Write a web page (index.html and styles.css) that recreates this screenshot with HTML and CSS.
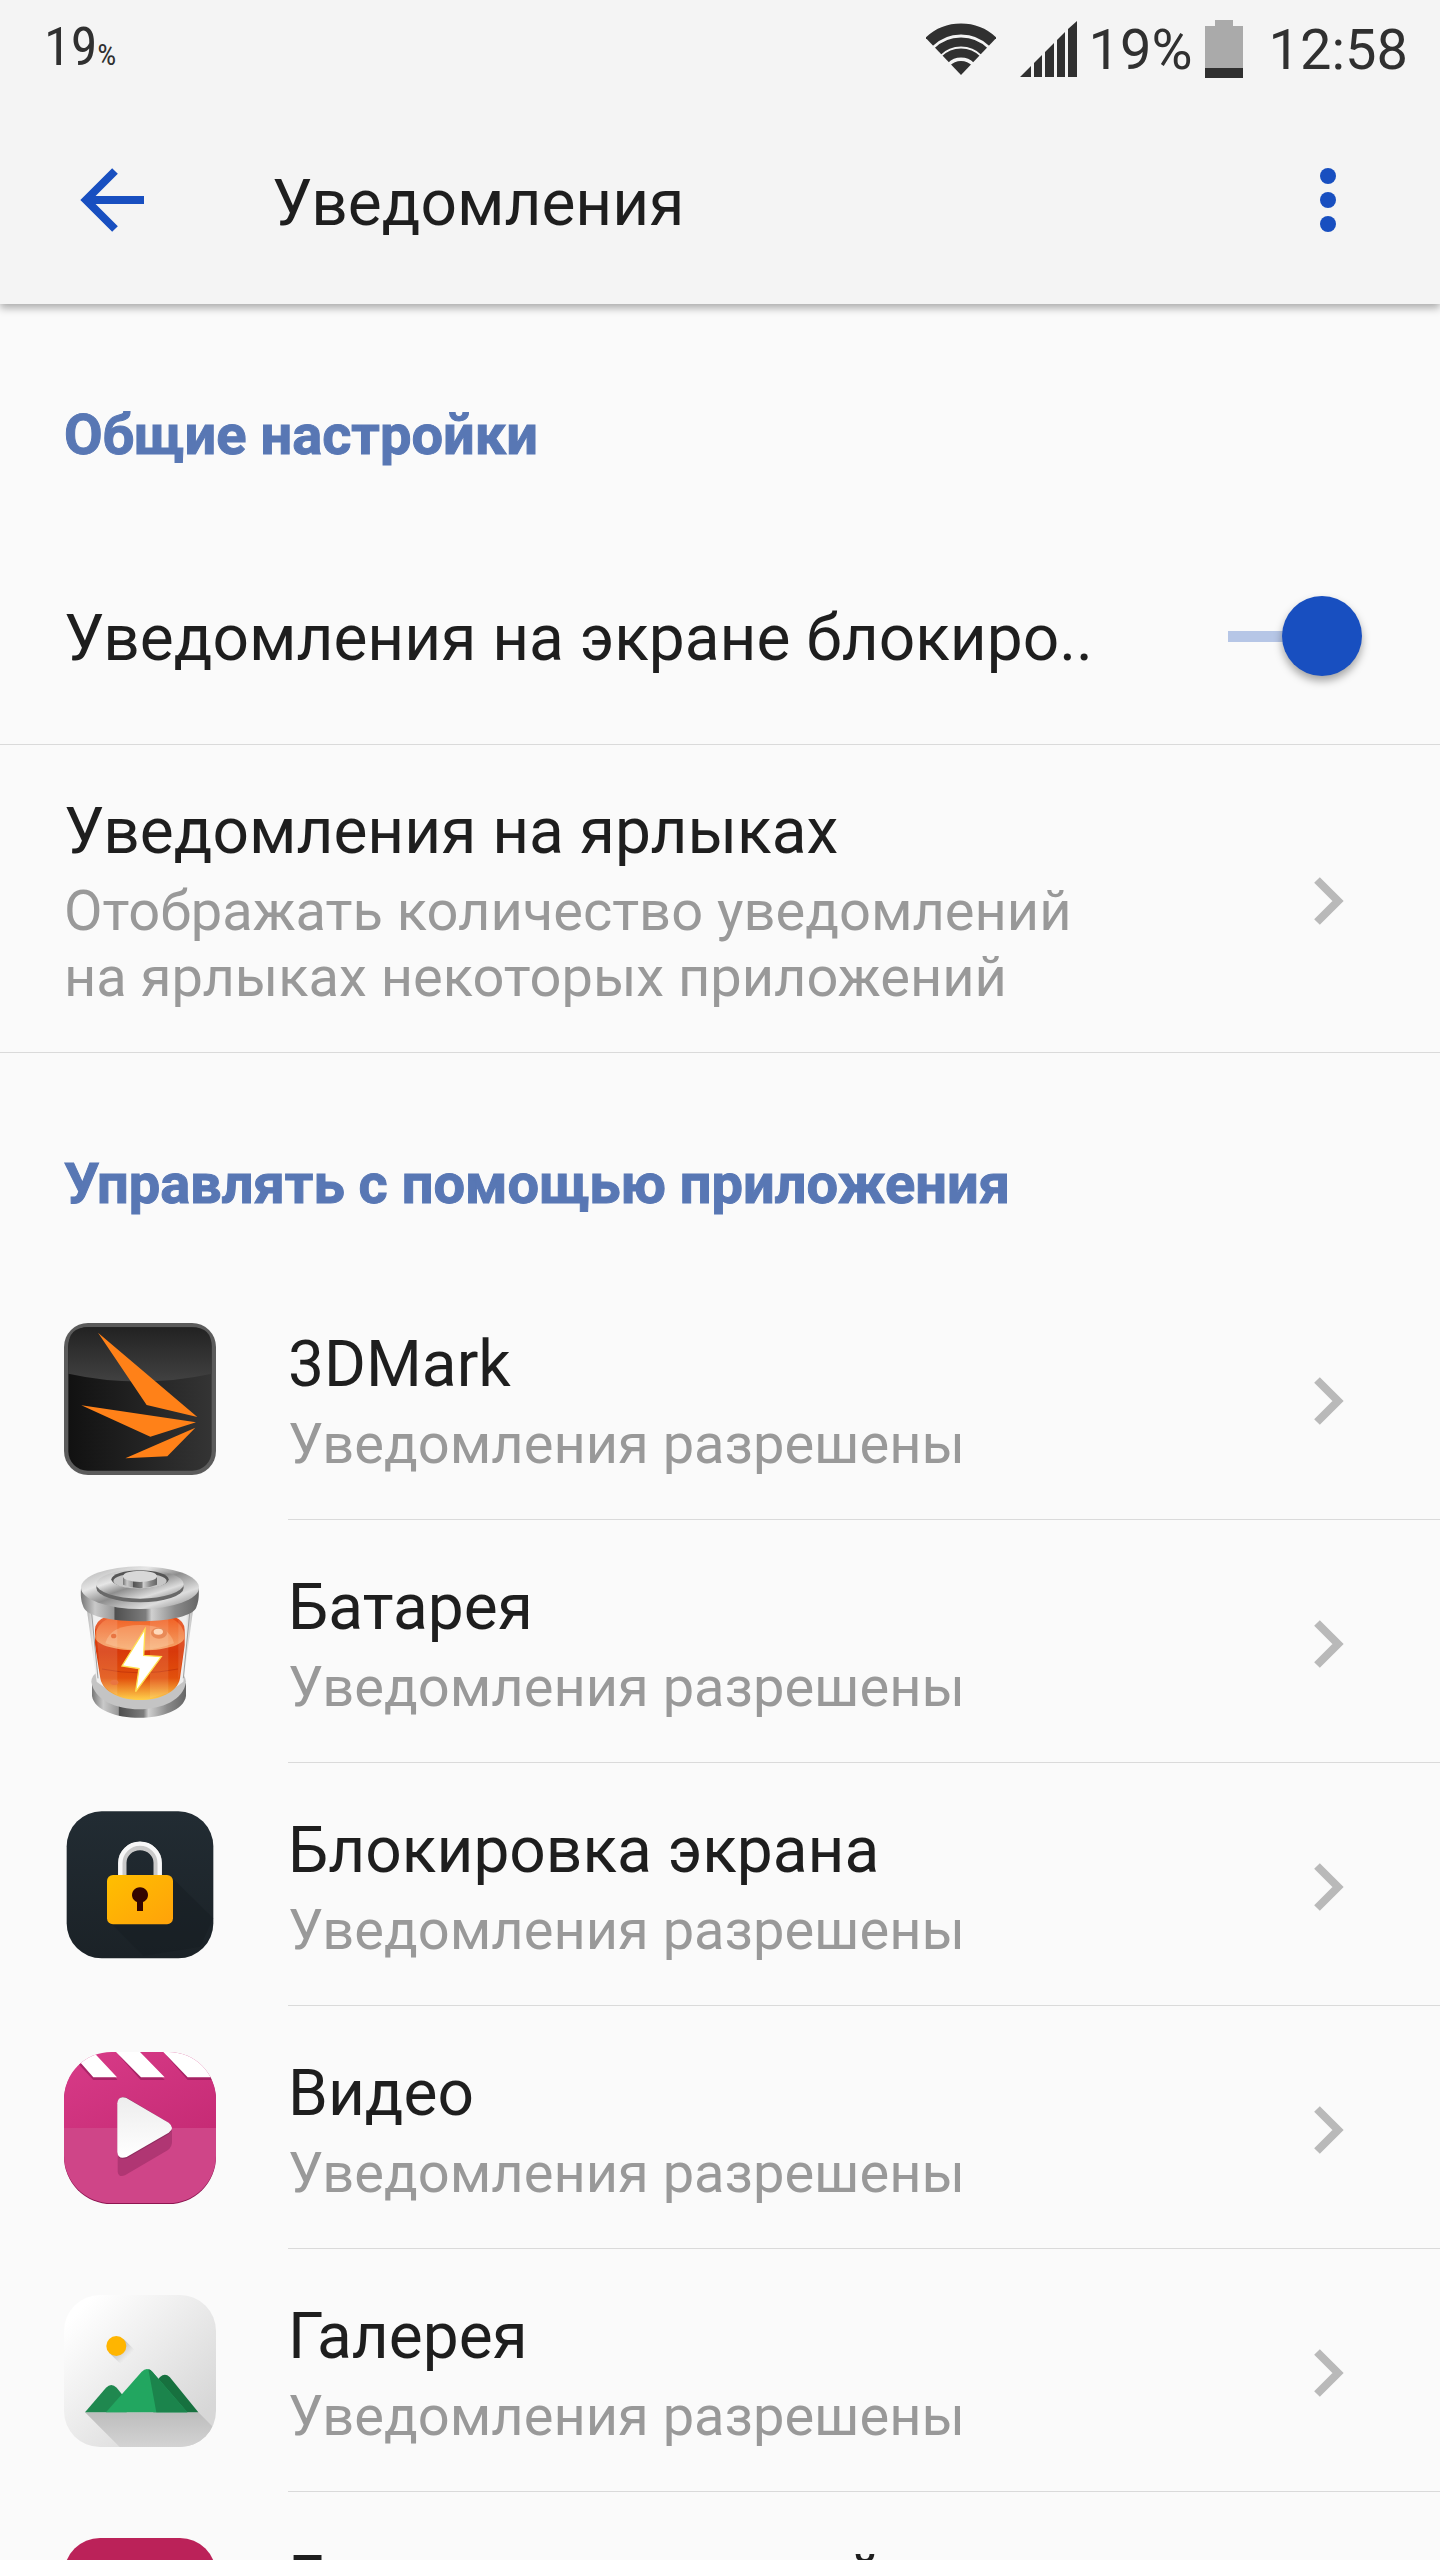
FILE: index.html
```html
<!DOCTYPE html>
<html lang="ru">
<head>
<meta charset="utf-8">
<meta name="viewport" content="width=device-width, initial-scale=1">
<title>Уведомления</title>
<link rel="stylesheet" href="styles.css">
</head>
<body>
<svg class="defs" aria-hidden="true">
  <symbol id="chevron" viewBox="0 0 30 48"><path d="M3 3 24 24 3 45" fill="none" stroke="#b9b9b9" stroke-width="8"/></symbol>
</svg>
<div class="screen">
  <header class="top">
    <div class="status">
      <span class="level">19<span class="level-unit">%</span></span>
      <div class="indicators">
        <svg class="wifi" viewBox="0 0 70 52" role="img" aria-label="Wi-Fi">
          <clipPath id="fan"><path d="M-3 12 35 52 73 12V0H-3z"/></clipPath>
          <g clip-path="url(#fan)" fill="none" stroke="#303030">
            <circle cx="35" cy="52" r="46" stroke-width="11"/>
            <circle cx="35" cy="53" r="34" stroke-width="9"/>
            <circle cx="35" cy="53" r="23" stroke-width="9"/>
            <circle cx="35" cy="54" r="8" stroke-width="16"/>
          </g>
        </svg>
        <svg class="signal" viewBox="0 0 57 56" role="img" aria-label="Сигнал сети">
          <path d="M0 56 11 45V56zM14 42 22 34V56H14zM25 31 34 22V56H25zM37 19 45 11V56H37zM48 8 57 0V56H48z" fill="#303030"/>
        </svg>
        <span class="percent">19%</span>
        <svg class="battery" viewBox="0 0 38 58" role="img" aria-label="Батарея">
          <path d="M0 6H10V0H28V6H38V48H0z" fill="#aaa"/><path d="M0 48H38V58H0z" fill="#303030"/>
        </svg>
        <time class="clock">12:58</time>
      </div>
    </div>
    <div class="bar">
      <button class="icon-button" type="button" aria-label="Назад">
        <svg viewBox="0 0 64 64"><path d="M35 3 6 32 35 61M6 32H64" fill="none" stroke="#184fc0" stroke-width="8"/></svg>
      </button>
      <h1 class="title">Уведомления</h1>
      <button class="icon-button" type="button" aria-label="Ещё">
        <svg viewBox="0 0 64 64"><g fill="#184fc0"><circle cx="32" cy="8" r="8"/><circle cx="32" cy="32" r="8"/><circle cx="32" cy="56" r="8"/></g></svg>
      </button>
    </div>
  </header>

  <main class="content">
    <h2 class="section">Общие настройки</h2>
    <div class="row row-switch">
      <label class="name" for="lock">Уведомления на экране блокиро..</label>
      <input class="switch" id="lock" type="checkbox" role="switch" checked>
    </div>
    <a class="row row-badges" href="#badges">
      <span class="text">
        <span class="name">Уведомления на ярлыках</span>
        <span class="note">Отображать количество уведомлений на ярлыках некоторых приложений</span>
      </span>
      <svg class="chevron"><use href="#chevron"/></svg>
    </a>

    <h2 class="section">Управлять с помощью приложения</h2>
    <nav class="apps">
      <a class="app" href="#3dmark">
        <svg class="app-icon" viewBox="72 69 456 456">
          <defs>
            <linearGradient id="mk" x1="0" x2="1"><stop offset="0" stop-color="#111"/><stop offset="1" stop-color="#343434"/></linearGradient>
            <linearGradient id="mg" x1="0" x2="0" y1="0" y2="1"><stop offset="0" stop-color="#222"/><stop offset="1" stop-color="#414141"/></linearGradient>
          </defs>
          <rect x="72" y="69" width="456" height="456" rx="72" fill="#5b5b5b"/>
          <rect x="85" y="82" width="430" height="430" rx="58" fill="url(#mk)"/>
          <path d="M85 221V140Q85 82 143 82H457Q515 82 515 140V221Q300 268 85 221z" fill="url(#mg)"/>
          <path d="M174 98 472 351 320 315zM124 316 468 367 331 410zM466 383 382 469 256 475z" fill="#ff8118"/>
        </svg>
        <span class="app-body"><span class="text"><span class="name">3DMark</span><span class="note">Уведомления разрешены</span></span>
        <svg class="chevron"><use href="#chevron"/></svg></span>
      </a>
      <a class="app" href="#battery">
        <svg class="app-icon" viewBox="72 63 456 456">
          <defs>
            <linearGradient id="st" x1="0" x2="1"><stop offset="0" stop-color="#777"/><stop offset=".12" stop-color="#c9c9c9"/><stop offset=".28" stop-color="#999"/><stop offset=".29" stop-color="#4f4f4f"/><stop offset=".55" stop-color="#7d7d7d"/><stop offset=".6" stop-color="#d0d0d0"/><stop offset=".8" stop-color="#8a8a8a"/><stop offset="1" stop-color="#666"/></linearGradient>
            <linearGradient id="lid" x1="0" x2="1" y1="0" y2="1"><stop offset="0" stop-color="#aaa"/><stop offset=".3" stop-color="#e6e6e6"/><stop offset=".5" stop-color="#8e8e8e"/><stop offset=".75" stop-color="#ddd"/><stop offset="1" stop-color="#777"/></linearGradient>
            <linearGradient id="liq" x1="0" x2="0" y1="0" y2="1"><stop offset="0" stop-color="#e9531c"/><stop offset=".45" stop-color="#d8390a"/><stop offset=".75" stop-color="#e2500c"/><stop offset="1" stop-color="#ffd04c"/></linearGradient>
            <linearGradient id="sur" x1="0" x2="0" y1="0" y2="1"><stop offset="0" stop-color="#f0581c"/><stop offset="1" stop-color="#f5a468"/></linearGradient>
            <linearGradient id="gl" x1="0" x2="1"><stop offset="0" stop-color="#b2b2b2"/><stop offset=".07" stop-color="#f0f0f0"/><stop offset=".93" stop-color="#eee"/><stop offset="1" stop-color="#b8b8b8"/></linearGradient>
          </defs>
          <path d="M156 415V453C170 540 425 540 438 453V415z" fill="url(#st)"/>
          <path d="M154 410C170 520 425 520 438 410Q435 385 418 380H174Q155 390 154 410z" fill="#c4c4c4"/>
          <path d="M140 190H460L430 410Q300 510 170 410z" fill="url(#gl)"/>
          <path d="M165 255Q165 200 300 200T434 255V300L420 400C405 487 197 487 181 400L165 300z" fill="url(#liq)"/>
          <path d="M165 275C170 330 430 330 434 275Q430 205 300 205T165 275z" fill="url(#sur)"/>
          <path d="M196 295Q210 240 300 240T402 295Q300 335 196 295z" fill="#ffe0b8" opacity=".3"/>
          <path d="M186 372Q300 395 414 372" fill="none" stroke="#b82c08" stroke-width="3" opacity=".6"/>
          <path d="M165 210H232V450Q190 435 181 400z" fill="#fff" opacity=".12"/>
          <path d="M330 205H385V445L330 460zM415 220H434V300L415 405z" fill="#fff" opacity=".1"/>
          <path d="M155 205 174 400M449 205 430 400" stroke="#a0a0a0" stroke-width="3"/>
          <ellipse cx="357" cy="264" rx="24" ry="17" fill="#e98a57"/><ellipse cx="355" cy="260" rx="14" ry="9" fill="#ffd9bb"/>
          <ellipse cx="221" cy="273" rx="8" ry="7" fill="#e97542"/><ellipse cx="223" cy="412" rx="12" ry="8" fill="#e97542"/>
          <path d="M315 252 246 363 297 371 287 440 364 335 311 331z" fill="#fff" stroke="#ffe04f" stroke-width="4"/>
          <path d="M123 130C120 165 128 180 132 190C160 242 440 242 468 190C474 175 478 160 476 130z" fill="url(#st)"/>
          <ellipse cx="300" cy="128" rx="177" ry="64" fill="url(#lid)"/>
          <ellipse cx="300" cy="128" rx="131" ry="44" fill="#686868"/>
          <ellipse cx="300" cy="117" rx="131" ry="44" fill="url(#lid)"/>
          <ellipse cx="300" cy="103" rx="86" ry="27" fill="#555"/><ellipse cx="300" cy="108" rx="80" ry="23" fill="#c6c6c6"/>
          <path d="M249 94V119Q300 140 351 119V94z" fill="url(#st)"/><ellipse cx="300" cy="94" rx="51" ry="17" fill="#d8d8d8"/>
        </svg>
        <span class="app-body"><span class="text"><span class="name">Батарея</span><span class="note">Уведомления разрешены</span></span>
        <svg class="chevron"><use href="#chevron"/></svg></span>
      </a>
      <a class="app" href="#lockscreen">
        <svg class="app-icon" viewBox="72 57 456 456">
          <defs>
            <linearGradient id="lk" x1="0" x2="0" y1="0" y2="1"><stop offset="0" stop-color="#222c33"/><stop offset="1" stop-color="#1b2227"/></linearGradient>
            <linearGradient id="yl" x1="0" x2="1" y1="0" y2="1"><stop offset="0" stop-color="#ffbf00"/><stop offset="1" stop-color="#ffa20a"/></linearGradient>
          </defs>
          <rect x="80" y="64" width="440" height="441" rx="105" fill="url(#lk)"/>
          <path d="M208 395 310 497 480 470 520 385 395 262V395z" fill="#171d21" opacity=".45"/>
          <path d="M247 260V218A53 50 0 0 1 353 218V260" fill="none" stroke="#c9c9c9" stroke-width="25"/>
          <path d="M241 260V220A59 59 0 0 1 359 220V260" fill="none" stroke="#f8f8f8" stroke-width="13"/>
          <rect x="201" y="255" width="198" height="148" rx="18" fill="url(#yl)"/>
          <path d="M291 336A24 23 0 1 1 309 336V363H291z" fill="#350500"/>
        </svg>
        <span class="app-body"><span class="text"><span class="name">Блокировка экрана</span><span class="note">Уведомления разрешены</span></span>
        <svg class="chevron"><use href="#chevron"/></svg></span>
      </a>
      <a class="app" href="#video">
        <svg class="app-icon" viewBox="72 66 456 456">
          <defs>
            <clipPath id="vc"><rect x="72" y="66" width="456" height="453" rx="142"/></clipPath>
            <linearGradient id="pk" x1="0" x2="1" y1="0" y2="1"><stop offset="0" stop-color="#d83b88"/><stop offset="1" stop-color="#c62b75"/></linearGradient>
            <linearGradient id="pl" x1="0" x2="0" y1="0" y2="1"><stop offset="0" stop-color="#ededed"/><stop offset="1" stop-color="#fff"/></linearGradient>
          </defs>
          <rect x="72" y="69" width="456" height="453" rx="142" fill="#8d1550"/>
          <g clip-path="url(#vc)">
            <path d="M72 66H528V294H72z" fill="url(#pk)"/><path d="M72 294H528V519H72z" fill="#cf4588"/>
            <path d="M110 96 160 150H232L226 142zM236 76 302 150H374L366 142zM378 76 443 150H515V142z" fill="#8d1955" opacity=".6"/>
            <path d="M110 85 160 142H231L160 66H100zM228 66 303 142H374L300 66zM370 66 443 142H528V66z" fill="#fff"/>
          </g>
          <path d="M233 380V425Q236 444 255 436L384 360Q396 350 396 335V300z" fill="#b03673"/>
          <path d="M233 223Q233 196 258 202L386 278Q406 294 386 312L260 385Q234 392 233 368z" fill="#8e2c5f"/>
          <path d="M232 220Q234 196 258 203L386 278Q406 294 386 308L260 381Q234 390 232 366z" fill="url(#pl)"/>
        </svg>
        <span class="app-body"><span class="text"><span class="name">Видео</span><span class="note">Уведомления разрешены</span></span>
        <svg class="chevron"><use href="#chevron"/></svg></span>
      </a>
      <a class="app" href="#gallery">
        <svg class="app-icon" viewBox="72 75 456 456">
          <defs>
            <clipPath id="gc"><rect x="72" y="75" width="456" height="456" rx="108"/></clipPath>
            <linearGradient id="gr" x1="0" x2="1" y1="0" y2="1"><stop offset=".1" stop-color="#fff"/><stop offset=".85" stop-color="#d7d7d7"/></linearGradient>
            <linearGradient id="ss" gradientUnits="userSpaceOnUse" x1="230" y1="230" x2="262" y2="262"><stop offset="0" stop-color="#bbb"/><stop offset="1" stop-color="#bbb" stop-opacity="0"/></linearGradient>
            <linearGradient id="ms" x1="0" x2="0" y1="0" y2="1"><stop offset="0" stop-color="#bdbdbd"/><stop offset="1" stop-color="#d3d3d3"/></linearGradient>
          </defs>
          <g clip-path="url(#gc)">
            <path d="M72 75H528V531H72z" fill="url(#gr)"/>
            <path d="M135 427H475L528 480V531H239z" fill="url(#ms)"/>
            <path d="M208 249 251 207 290 246 248 288z" fill="url(#ss)"/>
          </g>
          <circle cx="229" cy="228" r="30" fill="#ffb500"/>
          <path d="M135 427 198 353Q214 337 230 353L260 390V427z" fill="#1f884f"/>
          <path d="M340 427V345L360 321Q375 308 389 321L475 427z" fill="#17713f"/>
          <path d="M198 427 305 305Q321 289 337 305L442 427z" fill="#22a660"/>
          <path d="M325 297Q333 299 337 305L442 427H349z" fill="#1b844c"/>
        </svg>
        <span class="app-body"><span class="text"><span class="name">Галерея</span><span class="note">Уведомления разрешены</span></span>
        <svg class="chevron"><use href="#chevron"/></svg></span>
      </a>
      <a class="app" href="#group">
        <svg class="app-icon" viewBox="0 0 152 152"><rect width="152" height="152" rx="36" fill="#bb2259"/></svg>
        <span class="app-body"><span class="text"><span class="name">Группа приложений</span><span class="note">Уведомления разрешены</span></span>
        <svg class="chevron"><use href="#chevron"/></svg></span>
      </a>
    </nav>
  </main>
</div>
</body>
</html>
```
FILE: styles.css
```css
* { box-sizing: border-box; }

body {
  margin: 0;
  background: #fafafa;
  color: #1e1e1e;
  font-family: Roboto, "Noto Sans", sans-serif;
}

.defs { position: absolute; width: 0; height: 0; }

.screen {
  display: flex;
  flex-direction: column;
  height: 100vh;
}

.top {
  flex: none;
  z-index: 1;
  background: #f4f4f4;
  box-shadow: 0 4px 8px rgba(0, 0, 0, 0.32);
}

.status {
  display: flex;
  justify-content: space-between;
  align-items: center;
  height: 98px;
  padding: 0 32px 0 44px;
  color: #303030;
}

.level {
  padding-top: 4px;
  font-family: "Roboto Condensed", "Liberation Sans Narrow", Roboto, sans-serif;
  font-size: 54px;
  line-height: 98px;
}
.level-unit { font-size: 30px; }

.indicators { display: flex; align-items: center; }
.percent, .clock {
  padding-top: 2px;
  font-size: 56px;
  line-height: 100px;
}
.wifi { width: 70px; height: 52px; margin-right: 24px; }
.signal { width: 57px; height: 56px; margin-right: 12px; }
.battery { width: 38px; height: 58px; margin: 0 26px 0 12px; }

.bar {
  display: flex;
  align-items: center;
  height: 206px;
  padding: 0 80px 2px;
}
.icon-button {
  width: 64px;
  height: 64px;
  padding: 0;
  border: 0;
  background: none;
}
.icon-button svg { display: block; width: 64px; height: 64px; }
.title {
  flex: 1;
  margin: 0 0 0 128px;
  padding-top: 8px;
  font-size: 64px;
  font-weight: 400;
  line-height: 76px;
}

.content {
  flex: 1;
  min-height: 0;
  overflow-y: auto;
  scrollbar-width: none;
}

/* The outline thickens the bold weight without widening the line. */
.section {
  margin: 0;
  padding: 98px 64px 60px;
  color: #5877b4;
  font-size: 56px;
  font-weight: 700;
  line-height: 66px;
  -webkit-text-stroke: 1px #5877b4;
}

.row, .app { color: inherit; text-decoration: none; }

.row {
  display: flex;
  align-items: center;
  justify-content: space-between;
  border-bottom: 1px solid #dadada;
}
.row-switch { padding: 65px 78px 65px 64px; }
.row-switch .name { padding-top: 6px; }
.row-badges { padding: 47px 96px 42px 64px; gap: 200px; }

.text { display: flex; flex-direction: column; gap: 6px; }
.name { font-size: 64px; line-height: 80px; }
.note { color: #999; font-size: 56px; line-height: 66px; }

.switch {
  display: flex;
  flex: none;
  align-items: center;
  justify-content: flex-end;
  width: 134px;
  height: 80px;
  margin: 0;
  appearance: none;
  background: linear-gradient(#b6c6e6, #b6c6e6) left center / 60px 11px no-repeat;
}
.switch::before {
  content: "";
  width: 80px;
  height: 80px;
  border-radius: 50%;
  background: #184fc0;
  box-shadow: 0 5px 8px rgba(0, 0, 0, 0.35);
}

.chevron { flex: none; width: 30px; height: 48px; }

.app {
  display: flex;
  align-items: center;
  padding-left: 64px;
}
.app-icon { flex: none; width: 152px; height: 152px; }
.app-body {
  display: flex;
  flex: 1;
  align-items: center;
  justify-content: space-between;
  margin-left: 72px;
  padding: 48px 96px 42px 0;
  border-bottom: 1px solid #dadada;
}
```
